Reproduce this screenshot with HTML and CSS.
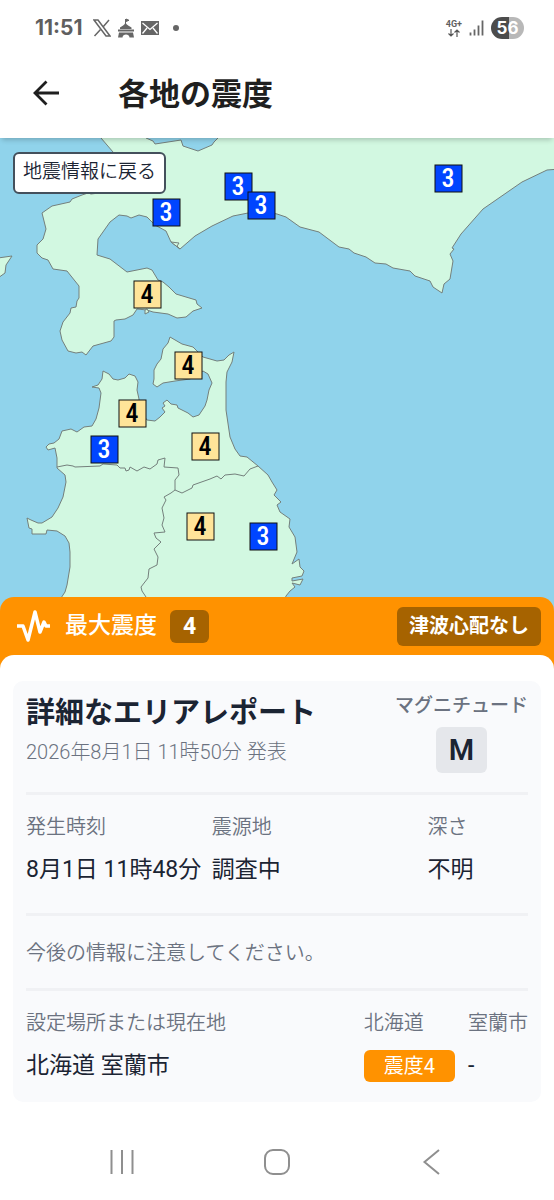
FILE: index.html
```html
<!DOCTYPE html>
<html lang="ja">
  <head>
    <meta charset="utf-8" />
    <meta name="viewport" content="width=device-width, initial-scale=1" />
    <title>各地の震度</title>
    <link rel="stylesheet" href="styles.css">
  </head>
  <body>
    <!-- Status bar -->
    <div class="status">
      <span class="clock">11:51</span>
      <svg width="18" height="18" viewBox="0 0 18 18" aria-hidden="true">
        <path d="M1 1h4l12 16h-4z" fill="#fff" stroke="#666" stroke-width="1.5" />
        <path d="M16 1l-6 7M7.500 10.500L1.500 17" stroke="#666" stroke-width="1.500" fill="none" />
      </svg>
      <svg width="18" height="20" viewBox="0 0 18 20" aria-hidden="true">
        <path d="M8.500 1v5M9 1l3 1.300L9 3.500z" stroke="#666" fill="#666" />
        <path d="M8.500 4.500c1 2.500 4 3.500 6 5v1.500H3V9.500c2-1.500 4.500-2.500 5.500-5zM1 11.500h16v2H1zM2 14.500h14l1 5h-4.500c0-4-7-4-7 0H1z" fill="#666" />
      </svg>
      <svg width="18" height="14" viewBox="0 0 18 14" aria-hidden="true">
        <path d="M0 0h18v14H0z" fill="#666" />
        <path d="M1.500 2L9 8.500 16.500 2M1.500 12.500L6 7M16.500 12.500L12 7" fill="none" stroke="#fff" stroke-width="1.300" />
      </svg>
      <span class="dot"></span>
      <div class="signal">
        <div class="network">
          <span>4G+</span>
          <svg width="12" height="8" viewBox="0 0 12 8" aria-hidden="true">
            <path d="M3 0v7M.5 4.500L3 7l2.500-2.500M9 8V1M6.500 3.500L9 1l2.500 2.500" fill="none" stroke="#555" stroke-width="1.200" />
          </svg>
        </div>
        <svg width="15" height="16" viewBox="0 0 15 16" aria-hidden="true">
          <path d="M1.500 12.500v3M5.500 9.500v6M9.500 5.500v10M13.500.5v15" stroke="#666" stroke-width="1.800" />
        </svg>
        <span class="battery">56</span>
      </div>
    </div>

    <header class="appbar">
      <button class="back" aria-label="戻る">
        <svg width="28" height="28" viewBox="0 0 28 28" aria-hidden="true">
          <path d="M27 13H3M14.500 1.500L3 13l11.500 11.500" fill="none" stroke="#1f1f1f" stroke-width="2.800" />
        </svg>
      </button>
      <h1>各地の震度</h1>
    </header>

    <main>
      <div class="map">
        <button class="return">地震情報に戻る</button>
        <svg class="map-canvas" viewBox="0 138 554 473" role="img" aria-label="震度マップ">
          <!-- Hokkaido -->
          <path class="land" d="M101 130V138L113 152 122 165 110 185 99 193 91 194 88 193 82 195 72 199 70 202 52 206 42 213 46 229 43 239 37 245 37 253 42 258 48 260 53 269 67 271 79 286 79 298 77 301 76 307 71 308 70 313 63 322 60 331 62 340 68 351 76 353 82 352 86 355 93 346 111 341 114 337 114 321 116 320 125 319 133 315 137 309 147 310 153 312 168 314 177 318 186 317 193 311 202 308 197 304 196 300 176 294 169 287 163 282 158 280 152 270 147 268 127 272 110 259 97 255 98 239 110 222 119 215 127 216 131 218 139 215 147 217 155 225 166 231 171 242 180 249 195 236 212 226 233 216 248 213 262 211 277 214 286 217 300 227 319 232 339 247 349 249 354 253 366 257 375 263 386 264 393 268 410 271 415 276 430 281 433 287 442 293 444 284 450 279 453 261 450 254 454 249 452 248 461 234 483 209 522 182 547 170 560 169V130Z" />
          <path class="sea" d="M144 130L146 138 153 141 155 144 181 140 183 146 198 151 212 145 214 142 219 137 220 130Z" />
          <path class="land" d="M171 242L179 243 177 246 180 249ZM145 310L145 314 149 312 147 309Z" />
          <path class="land" d="M-2 258L12 256 6 265 5 273 -2 278Z" />
          <!-- Northern Honshu -->
          <path class="land" d="M170 337L168 343 163 349 161 359 157 364 154 370 154 379 153 384 157 387 163 383 175 381 190 379 198 374 203 371 208 374 212 383 209 390 207 400 205 406 199 415 193 417 188 413 178 408 177 405 171 404 167 400 163 403 165 406 162 408 165 412 160 417 155 421 147 420 140 410 139 399 137 390 138 382 135 376 129 374 125 378 118 380 113 379 109 374 103 371 102 379 98 385 92 387 99 388 101 393 99 408 96 419 92 426 84 427 77 432 71 429 62 431 59 439 54 443 49 444 46 447 48 450 55 448 57 458 57 468 65 475 66 482 63 497 58 508 52 517 42 523 38 523 31 520 27 518 29 528 32 529 32 534 46 534 47 530 57 531 65 536 69 543 70 552 70 567 67 585 65 592 61 598 50 625H275L286 596 290 591 295 587 292 583 300 585 303 579 292 581 292 578 302 576 304 571 300 567 299 559 292 564 297 552 295 537 289 527 290 519 280 512 277 505 281 502 276 497 274 495 277 490 272 482 268 475 258 466 247 457 240 456 235 449 230 437 226 410 226 382 227 372 232 362 234 352 229 355 224 360 217 361 203 357 193 347 182 344Z" />
          <!-- Prefecture borders -->
          <path class="border" d="M57 467L67 465 73 466 75 467 100 466 103 464 117 465 120 468 125 468 126 471 129 470 130 467 137 471 144 467 150 469 157 464 158 460 165 458 164 467 178 468 179 475 175 480 175 490 182 493 192 488 193 485 210 479 217 476 221 479 225 475 235 474 244 476 250 469 258 466" />
          <path class="border" d="M175 490L171 493 164 497 166 500 162 508 164 518 162 525 165 532 154 533 156 538 161 542 154 549 158 557 157 565 149 569 148 578 141 587 142 591 148 600 151 615" />
          <!-- Intensity pins -->
          <g class="pin pin-3">
            <rect x="435" y="165" width="27" height="27" /><text x="448" y="187">3</text>
            <rect x="225" y="173" width="27" height="27" /><text x="238" y="195">3</text>
            <rect x="248" y="192" width="27" height="27" /><text x="261" y="214">3</text>
            <rect x="153" y="199" width="27" height="27" /><text x="166" y="221">3</text>
            <rect x="91" y="436" width="27" height="27" /><text x="104" y="458">3</text>
            <rect x="250" y="523" width="27" height="27" /><text x="263" y="545">3</text>
          </g>
          <g class="pin pin-4">
            <rect x="134" y="281" width="27" height="27" /><text x="147" y="303">4</text>
            <rect x="175" y="352" width="27" height="27" /><text x="188" y="374">4</text>
            <rect x="119" y="400" width="27" height="27" /><text x="132" y="422">4</text>
            <rect x="192" y="433" width="27" height="27" /><text x="205" y="455">4</text>
            <rect x="187" y="513" width="27" height="27" /><text x="200" y="535">4</text>
          </g>
        </svg>
      </div>

      <section class="panel">
        <div class="summary">
          <svg width="34" height="34" viewBox="0 0 34 34" aria-hidden="true">
            <path d="M1 17h6l5 14L19 3l5 20 4-10 2 4h4" fill="none" stroke="#fff" stroke-width="3.500" stroke-linejoin="round" />
          </svg>
          <h2>最大震度</h2>
          <span class="badge">4</span>
          <span class="badge badge-tsunami">津波心配なし</span>
        </div>

        <div class="sheet">
          <article class="card">
            <div class="card-head">
              <div>
                <h3>詳細なエリアレポート</h3>
                <p class="date">2026年8月1日 11時50分 発表</p>
              </div>
              <div class="magnitude">
                <p>マグニチュード</p>
                <strong>M</strong>
              </div>
            </div>
            <dl class="details">
              <div>
                <dt>発生時刻</dt>
                <dd>8月1日 11時48分</dd>
              </div>
              <div>
                <dt>震源地</dt>
                <dd>調査中</dd>
              </div>
              <div>
                <dt>深さ</dt>
                <dd>不明</dd>
              </div>
            </dl>
            <p class="note">今後の情報に注意してください。</p>
            <dl class="location">
              <div>
                <dt>設定場所または現在地</dt>
                <dd>北海道 室蘭市</dd>
              </div>
              <div>
                <dt>北海道</dt>
                <dd class="intensity">震度4</dd>
              </div>
              <div>
                <dt>室蘭市</dt>
                <dd>-</dd>
              </div>
            </dl>
          </article>
        </div>
      </section>
    </main>

    <!-- System navigation -->
    <nav class="sysnav">
      <button aria-label="履歴">
        <svg width="28" height="28" viewBox="0 0 28 28" aria-hidden="true">
          <path d="M3.500 2v24M14 2v24M24.500 2v24" />
        </svg>
      </button>
      <button aria-label="ホーム">
        <svg width="28" height="28" viewBox="0 0 28 28" aria-hidden="true">
          <rect x="2" y="2" width="24" height="24" rx="8" />
        </svg>
      </button>
      <button aria-label="戻る">
        <svg width="28" height="28" viewBox="0 0 28 28" aria-hidden="true">
          <path d="M21 2L6.500 14 21 26" />
        </svg>
      </button>
    </nav>
  </body>
</html>
```

FILE: styles.css
```css
* {
  box-sizing: border-box;
}
body {
  margin: 0;
  background: #fff;
  color: #1b2433;
  font-family: Roboto, "Noto Sans CJK JP", sans-serif;
  font-size: 20px;
  line-height: 24px;
}
h1, h2, h3, p, dl, dd {
  margin: 0;
}
button {
  padding: 0;
  border: none;
  background: none;
  color: inherit;
  font: inherit;
}
svg {
  display: block;
}

/* status bar */
.status {
  display: flex;
  align-items: center;
  gap: 6px;
  height: 50px;
  padding: 6px 30px 0 35px;
  color: #5f5f5f;
}
.clock {
  margin-right: 4px;
  font-family: Inter, sans-serif;
  font-size: 21px;
  font-weight: 700;
}
.dot {
  width: 6px;
  height: 6px;
  margin-left: 8px;
  border-radius: 50%;
  background: #666;
}
.signal {
  display: flex;
  align-items: center;
  gap: 7px;
  margin-left: auto;
}
.network {
  display: flex;
  flex-direction: column;
  align-items: center;
  font-size: 9px;
  font-weight: 700;
  line-height: 9px;
}
.battery {
  width: 33px;
  border-radius: 11px;
  background: linear-gradient(90deg, #4c4c4c 56%, #b8b8b8 56%);
  color: #fff;
  font-family: Inter, sans-serif;
  font-size: 17px;
  font-weight: 700;
  line-height: 22px;
  text-align: center;
}

/* app bar */
.appbar {
  position: relative;
  z-index: 1;
  display: flex;
  align-items: center;
  gap: 58px;
  height: 88px;
  padding-left: 32px;
  background: #fff;
  box-shadow: 0 4px 5px -2px rgba(0, 0, 0, 0.2);
}
h1 {
  padding-top: 2px;
  color: #1f1f1f;
  font-size: 31px;
  font-weight: 700;
  line-height: 40px;
}

/* map */
.map {
  position: relative;
}
.map-canvas {
  width: 100%;
  background: #90d3eb;
}
.return {
  position: absolute;
  top: 14px;
  left: 13px;
  padding: 5px 8px 7px;
  border: 2px solid #44505c;
  border-radius: 6px;
  background: #fff;
  font-size: 19px;
  font-weight: 350;
  line-height: 26px;
}
.land {
  fill: #d2f8e1;
  stroke: #74807c;
}
.sea {
  fill: #90d3eb;
  stroke: #74807c;
}
.border {
  fill: none;
  stroke: #74807c;
}
.pin rect {
  stroke: #111;
  stroke-width: 1px;
}
.pin text {
  font-family: "Roboto Condensed", "Liberation Sans Narrow", Roboto, sans-serif;
  font-size: 26px;
  font-weight: 500;
  text-anchor: middle;
}
.pin-3 rect {
  fill: #0045ff;
}
.pin-3 text {
  fill: #fff;
}
.pin-4 rect {
  fill: #ffe499;
}
.pin-4 text {
  fill: #000;
}

/* report panel */
.panel {
  position: relative;
  margin-top: -14px;
  border-radius: 14px 14px 0 0;
  background: #ff9200;
}
.summary {
  display: flex;
  align-items: center;
  height: 58px;
  padding: 0 13px 0 16px;
  color: #fff;
}
h2 {
  margin: 0 13px 0 15px;
  font-size: 23px;
  font-weight: 500;
  line-height: 32px;
}
.badge {
  padding: 0 13px;
  border-radius: 6px;
  background: #a66300;
  font-size: 23px;
  font-weight: 700;
  line-height: 33px;
}
.badge-tsunami {
  margin-left: auto;
  padding: 0 12px;
  font-size: 20px;
  font-weight: 600;
  line-height: 39px;
}
.sheet {
  padding: 26px 13px 0;
  border-radius: 14px 14px 0 0;
  background: #fff;
}
.card {
  padding: 13px 13px 20px;
  border-radius: 10px;
  background: #f9fafc;
}
.card-head {
  display: flex;
  justify-content: space-between;
  padding-bottom: 19px;
}
h3 {
  font-size: 29px;
  font-weight: 600;
  line-height: 38px;
}
.date {
  margin-top: 6px;
  color: #6b7280;
  font-weight: 300;
  line-height: 28px;
}
.magnitude {
  display: flex;
  flex-direction: column;
  align-items: center;
  gap: 9px;
  color: #6b7280;
  font-size: 19px;
  font-weight: 500;
}
.magnitude strong {
  padding: 0 13px;
  border-radius: 6px;
  background: #e5e7eb;
  color: #1b2433;
  font-size: 29px;
  font-weight: 600;
  line-height: 46px;
}
dt {
  color: #6b7280;
  font-weight: 350;
}
dd {
  margin-top: 15px;
  font-size: 23px;
  line-height: 32px;
}
.details {
  display: grid;
  grid-template-columns: 37fr 43fr 20fr;
  padding: 20px 0 27px;
  border-top: 3px solid #f0f1f4;
}
.note {
  padding: 25px 0 23px;
  border-top: 3px solid #f0f1f4;
  color: #6b7280;
  font-weight: 350;
}
.location {
  display: flex;
  gap: 13px;
  padding-top: 20px;
  border-top: 3px solid #f0f1f4;
}
.location div:first-child {
  flex: 1;
}
.intensity {
  padding: 0 20px;
  border-radius: 6px;
  background: #ff9200;
  color: #fff;
  font-size: 20px;
}

/* system navigation */
.sysnav {
  display: flex;
  justify-content: space-around;
  padding: 46px 44px 23px;
}
.sysnav svg {
  fill: none;
  stroke: #8f8f8f;
  stroke-width: 2px;
}
```
